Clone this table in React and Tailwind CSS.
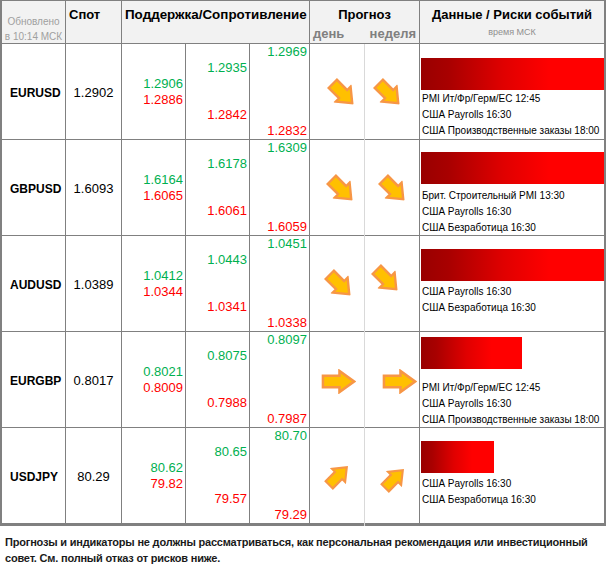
import React from 'react';

const cols = 'grid grid-cols-[64px_56px_64px_64px_60px_55px_55px_184px]';

const Arrow = ({ dir, w = 31, h = 25 }) => {
    const rot = dir === 'down' ? 'rotate-45' : dir === 'up' ? '-rotate-45' : '';
    return (
        <svg width={w} height={h} viewBox="0 0 36 26" preserveAspectRatio="none" className={rot}>
            <path
                d="M2 7 H19 V2 L34 13 L19 24 V19 H2 Z"
                fill="#ffc000"
                stroke="#f79646"
                strokeWidth="2.6"
                strokeLinejoin="miter"
            />
        </svg>
    );
};

const rows = [
    {
        pair: 'EURUSD', spot: '1.2902',
        a: ['1.2906', '1.2886'], b: ['1.2935', '1.2842'], c: ['1.2969', '1.2832'],
        day: 'down', week: 'down', dayOff: 'ml-[10px]', weekOff: 'ml-[-8px]',
        bar: 'w-[183px]', barTop: 'mt-[14px]', textTop: 'mt-[1px]',
        events: ['PMI Ит/Фр/Герм/ЕС 12:45', 'США Payrolls 16:30', 'США Производственные заказы 18:00'],
    },
    {
        pair: 'GBPUSD', spot: '1.6093',
        a: ['1.6164', '1.6065'], b: ['1.6178', '1.6061'], c: ['1.6309', '1.6059'],
        day: 'down', week: 'down', dayOff: 'ml-[9px]', weekOff: 'ml-[2px]',
        bar: 'w-[183px]', barTop: 'mt-[12px]', textTop: 'mt-[4px]',
        events: ['Брит. Строительный PMI 13:30', 'США Payrolls 16:30', 'США Безработица 16:30'],
    },
    {
        pair: 'AUDUSD', spot: '1.0389',
        a: ['1.0412', '1.0344'], b: ['1.0443', '1.0341'], c: ['1.0451', '1.0338'],
        day: 'down', week: 'down', dayOff: 'ml-[5px] mt-[-2px]', weekOff: 'ml-[-11px] mt-[-12px]',
        bar: 'w-[183px]', barTop: 'mt-[13px]', textTop: 'mt-[3px]',
        events: ['США Payrolls 16:30', 'США Безработица 16:30'],
    },
    {
        pair: 'EURGBP', spot: '0.8017',
        a: ['0.8021', '0.8009'], b: ['0.8075', '0.7988'], c: ['0.8097', '0.7987'],
        day: 'right', week: 'right', dayOff: 'ml-[3px]', weekOff: 'ml-[15px]',
        bar: 'w-[101px]', barTop: 'mt-[5px]', textTop: 'mt-[11px]',
        events: ['PMI Ит/Фр/Герм/ЕС 12:45', 'США Payrolls 16:30', 'США Производственные заказы 18:00'],
    },
    {
        pair: 'USDJPY', spot: '80.29',
        a: ['80.62', '79.82'], b: ['80.65', '79.57'], c: ['80.70', '79.29'],
        day: 'up', week: 'up', dayOff: 'ml-[2px] mt-[-2px]', weekOff: 'ml-[4px] mt-[4px]',
        bar: 'w-[73px]', barTop: 'mt-[13px]', textTop: 'mt-[3px]',
        events: ['США Payrolls 16:30', 'США Безработица 16:30'],
    },
];

const Levels = ({ vals, gap }) => (
    <div className={`flex flex-col items-end justify-center pr-[2px] pb-[3px] border-r border-[#808080] ${gap}`}>
        <span className="text-[#00b050] leading-[16px]">{vals[0]}</span>
        <span className="text-[#ff0000] leading-[16px]">{vals[1]}</span>
    </div>
);

const pick = (d) =>
    d === 'right' ? <Arrow dir="right" w={35} h={25} /> : d === 'up' ? <Arrow dir="up" w={28} h={22} /> : <Arrow dir="down" />;

const App = () => {
    return (
        <div className="w-[606px] h-[568px] bg-white font-['Liberation_Sans',Arial,sans-serif] text-black">
            <div className="w-[606px] border-t border-l-2 border-r-2 border-b-[3px] border-[#808080]">
                {/* header */}
                <div className={`${cols} h-[43px] bg-[#f2f2f2] border-b border-[#808080]`}>
                    <div className="border-r border-[#808080] flex flex-col items-center pt-[13px] text-[10px] leading-[15px] text-[#a0a0a0]">
                        <span>Обновлено</span>
                        <span>в 10:14 МСК</span>
                    </div>
                    <div className="border-r border-[#808080] pl-[3px] pt-[6px] text-[13px] font-bold leading-[16px]">Спот</div>
                    <div className="col-span-3 border-r border-[#808080] pl-[3px] pt-[6px] text-[13.4px] font-bold leading-[16px] whitespace-nowrap">
                        Поддержка/Сопротивление
                    </div>
                    <div className="col-span-2 border-r border-[#808080] flex flex-col pt-[6px]">
                        <span className="text-center text-[13px] font-bold leading-[16px]">Прогноз</span>
                        <div className="flex justify-between px-[3px] mt-[3px] text-[13px] font-bold leading-[16px] text-[#808080]">
                            <span>день</span>
                            <span>неделя</span>
                        </div>
                    </div>
                    <div className="flex flex-col items-center pt-[6px]">
                        <span className="text-[13px] font-bold leading-[16px] whitespace-nowrap">Данные / Риски событий</span>
                        <span className="mt-[4px] text-[9px] leading-[11px] text-[#909090]">время МСК</span>
                    </div>
                </div>

                {rows.map((r, i) => (
                    <div
                        key={r.pair}
                        className={`${cols} ${i === rows.length - 1 ? 'h-[95px]' : 'h-[96px] border-b border-[#808080]'} text-[13px]`}
                    >
                        <div className="border-r border-[#808080] flex items-center pl-[8px] font-bold text-[12px]">{r.pair}</div>
                        <div className="border-r border-[#808080] flex items-center justify-center">{r.spot}</div>
                        <Levels vals={r.a} gap="gap-0" />
                        <Levels vals={r.b} gap="gap-[31px]" />
                        <Levels vals={r.c} gap="gap-[63px]" />
                        <div className="border-r border-[#d9d9d9] flex items-center justify-center">
                            <div className={r.dayOff}>{pick(r.day)}</div>
                        </div>
                        <div className="border-r border-[#808080] flex items-center justify-center">
                            <div className={r.weekOff}>{pick(r.week)}</div>
                        </div>
                        <div className="flex flex-col overflow-hidden pl-[1px]">
                            <div className={`${r.barTop} ${r.bar} h-[32px] shrink-0 bg-[linear-gradient(to_right,#990000_0%,#a80000_15%,#e00000_45%,#ff0000_70%)]`} />
                            <div className={`${r.textTop} pl-[1px] flex flex-col text-[10px] leading-[16px] whitespace-nowrap`}>
                                {r.events.map((e) => (
                                    <span key={e}>{e}</span>
                                ))}
                            </div>
                        </div>
                    </div>
                ))}
            </div>

            <div className="pl-[5px] pt-[8px] text-[11px] font-bold leading-[16px] tracking-[-0.2px] text-[#1a1a1a] whitespace-nowrap">
                <p>Прогнозы и индикаторы не должны рассматриваться, как персональная рекомендация или инвестиционный</p>
                <p>совет. См. полный отказ от рисков ниже.</p>
            </div>
        </div>
    );
};

export default App;
